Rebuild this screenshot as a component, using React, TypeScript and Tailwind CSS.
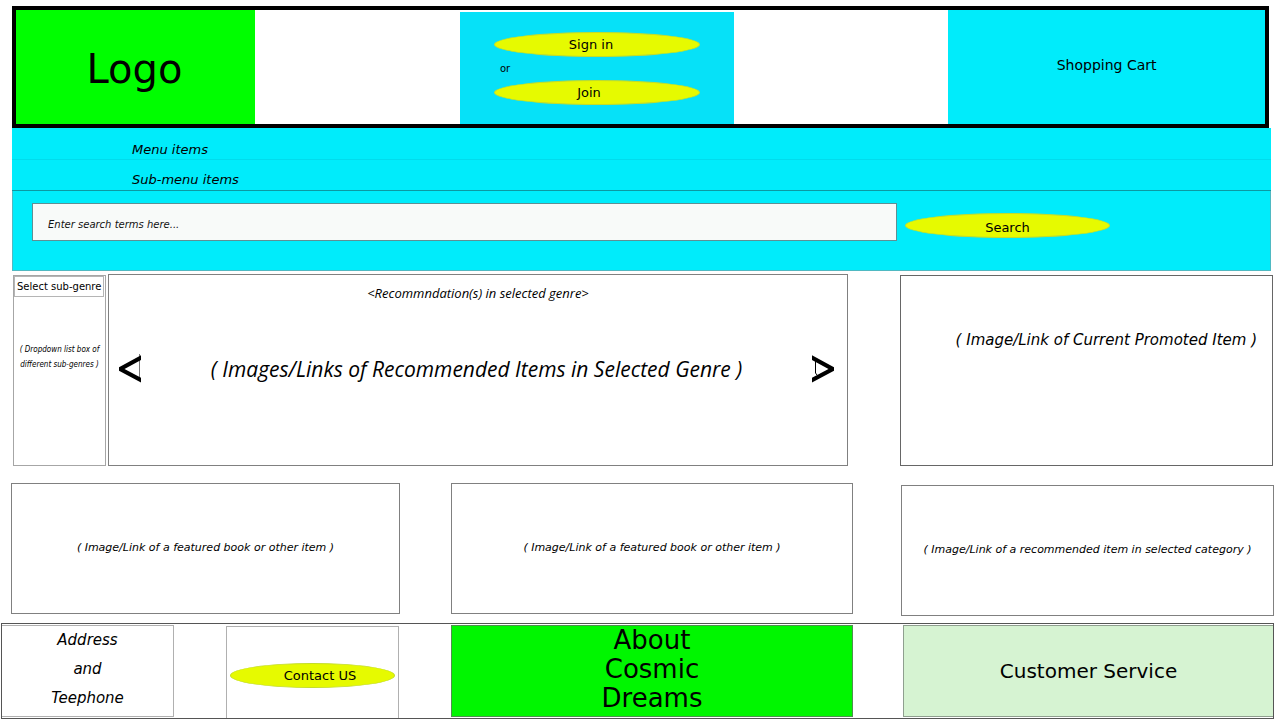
import type { ReactNode } from "react";

function PillButton({ children, className }: { children: ReactNode; className: string }) {
  return (
    <button
      type="button"
      className={`flex h-[25px] items-center justify-center rounded-[50%] border border-[#c3dc2a] bg-[#e6fa00] text-[13px] leading-none ${className}`}
    >
      {children}
    </button>
  );
}

function Header() {
  return (
    <header className="ml-3 mr-[11px] grid min-h-[122px] grid-cols-[239fr_205fr_275fr_214fr_317fr] border-4 border-black bg-white">
      <a
        href="#home"
        className="flex items-center justify-center bg-[#00fe00] pr-[2px] pt-1 text-[40px] leading-none"
      >
        Logo
      </a>
      <div className="col-start-3 mt-[2px] flex flex-col items-center bg-[#06e1f8] pt-5">
        <PillButton className="w-3/4 pr-3">Sign in</PillButton>
        <p className="w-3/4 pl-[6px] pt-px text-[10px] leading-[22px]">or</p>
        <PillButton className="w-3/4 pr-4">Join</PillButton>
      </div>
      <a
        href="#cart"
        className="col-start-5 flex justify-center bg-[#00ecfb] pt-[45px] text-sm"
      >
        Shopping Cart
      </a>
    </header>
  );
}

function Navigation() {
  return (
    <nav aria-label="Main" className="ml-3 mr-[9px] bg-[#00ecfb] text-[13px] italic">
      <a
        href="#menu"
        className="block border-b border-[#00dcec] pl-[120px] pt-[13px] leading-[18px]"
      >
        Menu items
      </a>
      <a
        href="#submenu"
        className="block border-b border-[#0b98a2] pb-px pl-[120px] pt-[11px] leading-[18px]"
      >
        Sub-menu items
      </a>
    </nav>
  );
}

function SearchBar() {
  return (
    <form
      role="search"
      onSubmit={(event) => event.preventDefault()}
      className="ml-3 mr-[9px] grid min-h-[80px] grid-cols-[865fr_205fr_152fr] items-start gap-x-2 border border-t-0 border-[#4fb9c2] bg-[#00ecfb] pl-[19px] pt-3"
    >
      <input
        type="search"
        aria-label="Search terms"
        placeholder="Enter search terms here..."
        className="h-[38px] w-full border border-[#5f8f94] bg-[#f8faf9] px-[15px] pt-1 text-[10px] italic outline-none placeholder:text-[#111111] placeholder:opacity-100"
      />
      <PillButton className="mt-[10px] w-full pt-1">Search</PillButton>
    </form>
  );
}

function PreviousArrow() {
  return (
    <svg viewBox="0 0 24 32" className="h-8 w-6" aria-hidden="true">
      <path d="M21.5 1v27" fill="none" stroke="#777777" strokeWidth="1" />
      <path d="M23 2.2V7L6.5 16 23 24.8v4.8L1 17.8v-3.6Z" fill="#000000" />
    </svg>
  );
}

function NextArrow() {
  return (
    <svg viewBox="0 0 24 32" className="h-8 w-6" aria-hidden="true">
      <path d="M4.5 8v12l1.5 2" fill="none" stroke="#000000" strokeWidth="1" />
      <path d="M1 2.2V7l16.500 9L1 24.800v4.800l22-11.800v-3.600Z" fill="#000000" />
    </svg>
  );
}

function Recommendations() {
  return (
    <section className="flex min-h-[192px] flex-col border border-[#808080] bg-white">
      <h2 className="pt-[10px] text-center font-['Open_Sans','DejaVu_Sans_Condensed',sans-serif] text-[13px] italic leading-4">
        &lt;Recommndation(s) in selected genre&gt;
      </h2>
      <div className="flex items-center justify-between pl-[9px] pr-3 pt-[52px]">
        <button type="button" aria-label="Previous items">
          <PreviousArrow />
        </button>
        <a
          href="#recommended"
          className="font-['Open_Sans','DejaVu_Sans_Condensed',sans-serif] text-[21px] italic leading-8"
        >
          ( Images/Links of Recommended Items in Selected Genre )
        </a>
        <button type="button" aria-label="Next items">
          <NextArrow />
        </button>
      </div>
    </section>
  );
}

function GenrePicker() {
  return (
    <aside className="mt-px border border-[#a6a6a6] bg-white text-center">
      <select
        aria-label="Select sub-genre"
        className="block h-[21px] w-[90px] appearance-none border border-[#b5b5b5] bg-white pl-[2px] text-[10px] outline-none"
      >
        <option>Select sub-genre</option>
      </select>
      <p className="whitespace-nowrap pt-[45px] font-['DejaVu_Sans_Condensed','DejaVu_Sans',sans-serif] text-[8px] italic leading-[15px]">
        ( Dropdown list box of
        <br />
        different sub-genres )
      </p>
    </aside>
  );
}

function Card({ children, className }: { children: ReactNode; className: string }) {
  return (
    <a
      href="#item"
      className={`flex min-h-[131px] items-center justify-center whitespace-nowrap border border-[#808080] bg-white text-[11px] italic ${className}`}
    >
      {children}
    </a>
  );
}

function Footer() {
  return (
    <footer className="ml-px mr-[6px] mt-[7px] grid min-h-[96px] grid-cols-[172fr_52fr_173fr_52fr_402fr_50fr_370fr] border border-[#555555] bg-white">
      <address className="mb-px mt-px flex flex-col items-center border border-l-0 border-[#b0b0b0] text-[15px] italic leading-[29px]">
        <span>Address</span>
        <span>and</span>
        <span>Teephone</span>
      </address>
      <div className="col-start-3 mt-[2px] flex items-center justify-center border border-b-0 border-[#b0b0b0] pt-[6px]">
        <PillButton className="w-[97%] pl-[15px]">Contact US</PillButton>
      </div>
      <a
        href="#about"
        className="col-start-5 mb-px mt-px flex flex-col items-center border border-[#4f8f4f] bg-[#00f600] text-[26px] leading-[29px]"
      >
        <span>About</span>
        <span>Cosmic</span>
        <span>Dreams</span>
      </a>
      <a
        href="#service"
        className="col-start-7 mb-px mt-px flex items-center justify-center border border-r-0 border-[#8f9f8f] bg-[#d6f3d2] text-xl"
      >
        Customer Service
      </a>
    </footer>
  );
}

export default function App() {
  return (
    <div className="bg-white pt-[6px] font-['DejaVu_Sans',sans-serif] text-black">
      <Header />
      <Navigation />
      <SearchBar />
      <main>
        <div className="ml-[13px] mr-[7px] mt-[3px] grid grid-cols-[835fr_373fr] gap-x-[52px]">
          <div className="grid grid-cols-[93fr_740fr] gap-x-[2px]">
            <GenrePicker />
            <Recommendations />
          </div>
          <a
            href="#promoted"
            className="mt-px flex justify-end border border-[#666666] bg-white pr-[15px] pt-[53px] text-[15px] italic"
          >
            ( Image/Link of Current Promoted Item )
          </a>
        </div>
        <div className="ml-[11px] mr-[6px] mt-[17px] grid grid-cols-[389fr_51fr_402fr_48fr_373fr] items-start">
          <Card className="">( Image/Link of a featured book or other item )</Card>
          <Card className="col-start-3">( Image/Link of a featured book or other item )</Card>
          <Card className="col-start-5 mt-[2px]">
            ( Image/Link of a recommended item in selected category )
          </Card>
        </div>
      </main>
      <Footer />
    </div>
  );
}
